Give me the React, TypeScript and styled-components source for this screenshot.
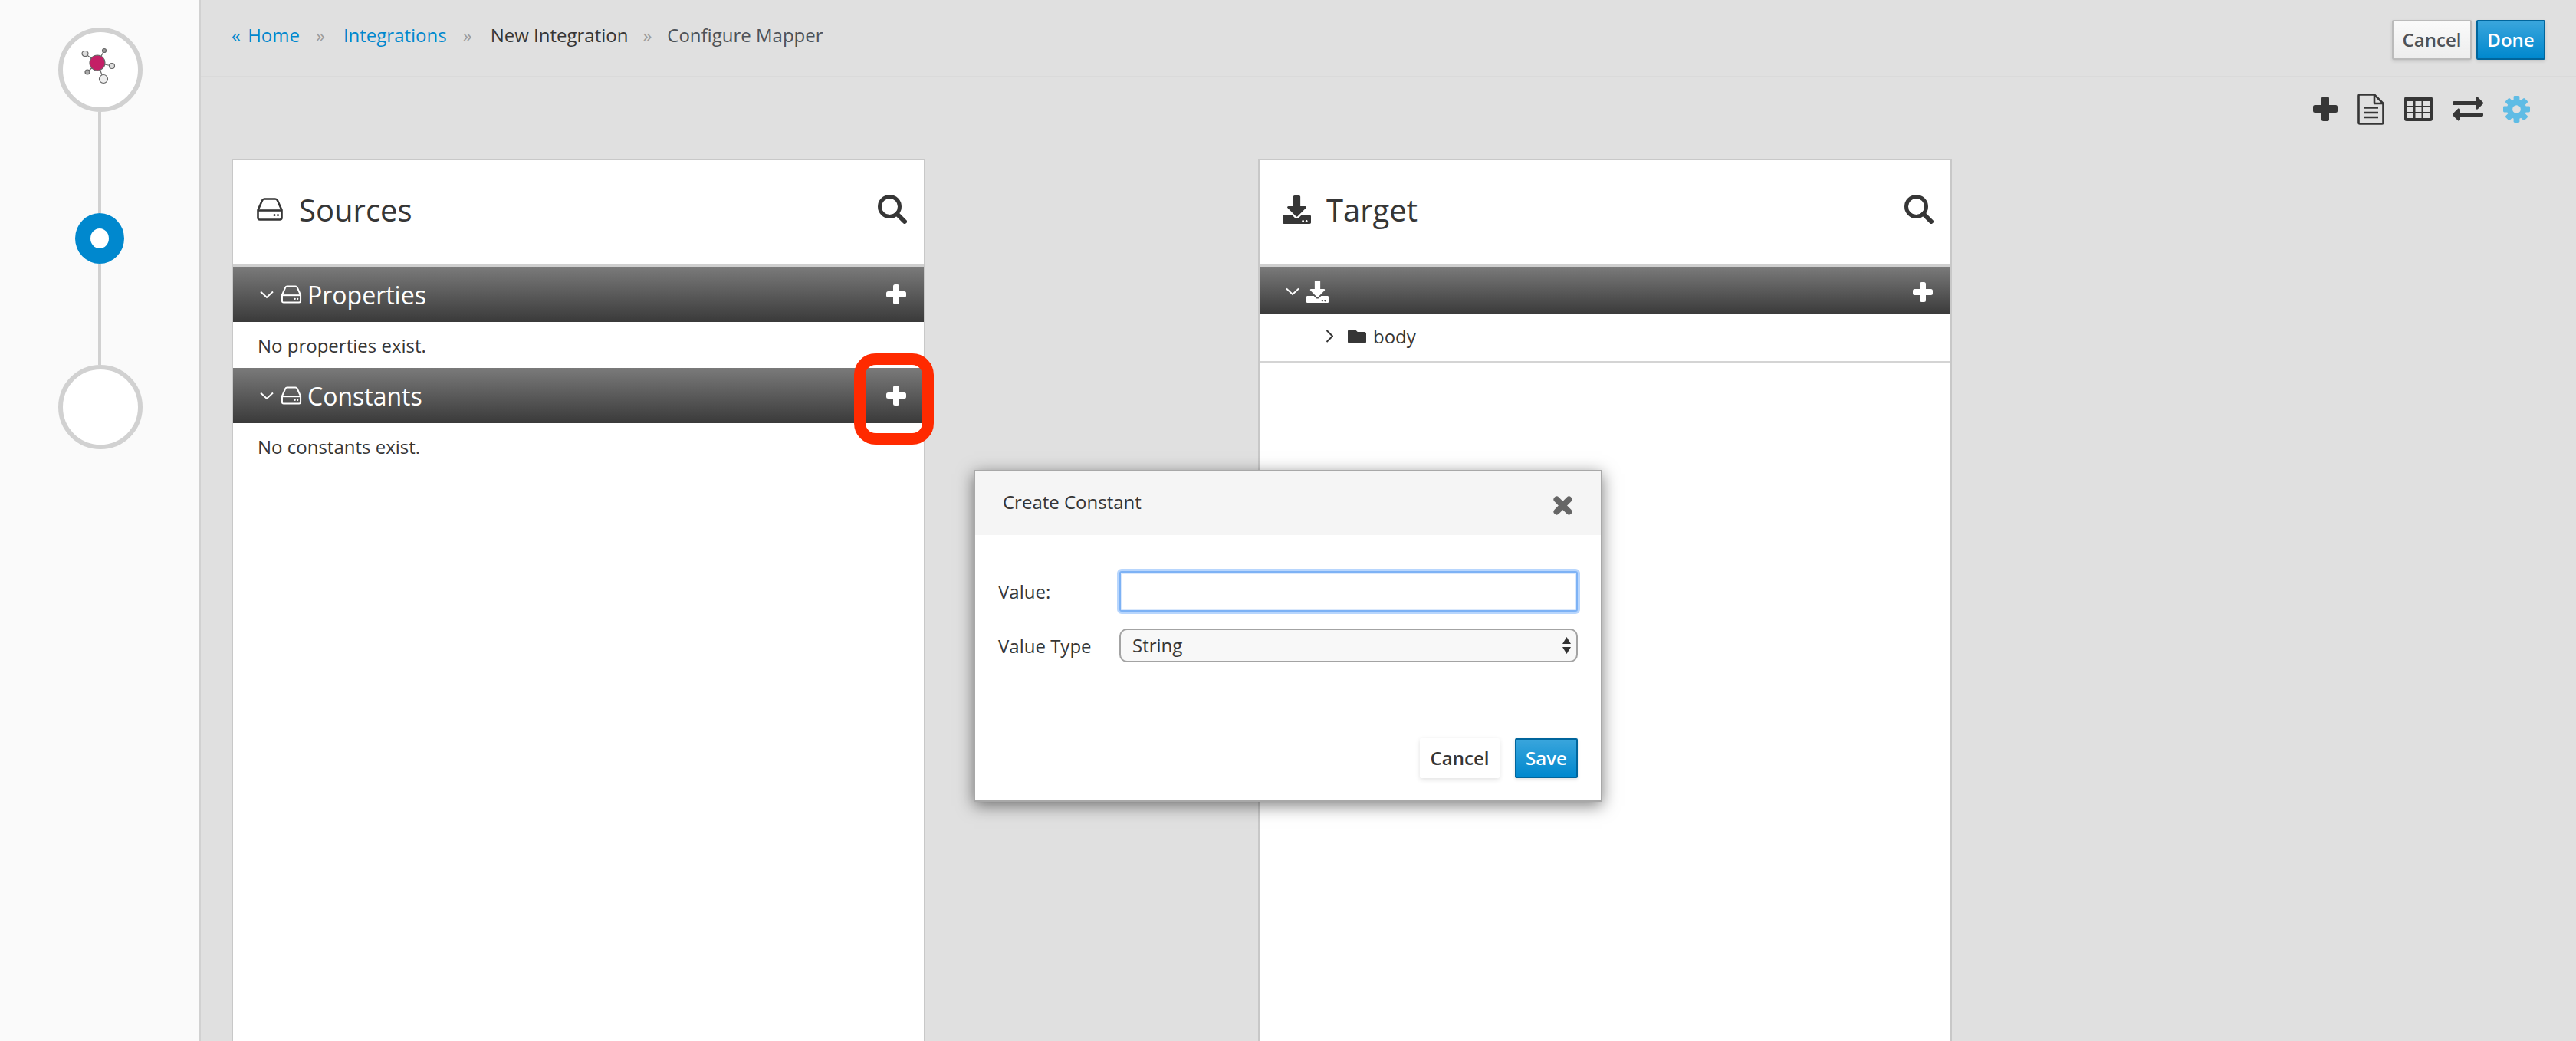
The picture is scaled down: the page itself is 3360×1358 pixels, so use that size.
import React from "react";
import styled, { createGlobalStyle } from "styled-components";
import { FaExchangeAlt, FaDownload, FaFolder } from "react-icons/fa";

const Global = createGlobalStyle`
  html, body { margin: 0; padding: 0; background: #e0e0e0; }
  * { box-sizing: border-box; }
`;

const Page = styled.div`
  position: relative;
  display: flex;
  width: 3360px;
  height: 1358px;
  overflow: hidden;
  background: #e0e0e0;
  font-family: "Open Sans", "Noto Sans", sans-serif;
  font-size: 24px;
  color: #363636;
`;

const Sidebar = styled.aside`
  flex: 0 0 262px;
  display: flex;
  flex-direction: column;
  align-items: center;
  padding-top: 36px;
  background: #fafafa;
  border-right: 2px solid #d1d1d1;
`;

const StepCircle = styled.div`
  width: 110px;
  height: 110px;
  margin-left: 2px;
  border-radius: 50%;
  border: 6px solid #d1d1d1;
  background: #fff;
  display: flex;
  align-items: center;
  justify-content: center;
  flex: none;
`;

const Connector = styled.div`
  width: 4px;
  height: 132px;
  background: #d1d1d1;
  flex: none;
`;

const ActiveStep = styled.div`
  width: 64px;
  height: 66px;
  border-radius: 50%;
  border: 20px solid #0088ce;
  background: #fff;
  flex: none;
`;

const Main = styled.main`
  flex: 1;
  min-width: 0;
  display: flex;
  flex-direction: column;
`;

const TopBar = styled.header`
  flex: 0 0 101px;
  display: flex;
  justify-content: space-between;
  align-items: flex-start;
  padding: 19px 40px 0 40px;
  border-bottom: 2px solid #dadada;
`;

const Crumbs = styled.nav`
  display: flex;
  align-items: center;
  height: 52px;
  font-size: 24px;
`;

const CrumbLink = styled.span`
  color: #0088ce;
`;

const BackMark = styled.span`
  margin-right: 3px;
`;

const CrumbText = styled.span<{ $muted?: boolean }>`
  color: ${(p) => (p.$muted ? "#4d5258" : "#363636")};
`;

const CrumbSep = styled.span<{ $tight?: boolean }>`
  color: #9c9c9c;
  margin: 0 ${(p) => (p.$tight ? 20 : 24)}px 0 ${(p) => (p.$tight ? 19 : 21)}px;
`;

const Actions = styled.div`
  display: flex;
  gap: 6px;
  margin-top: 7px;
`;

const PlainButton = styled.button<{ $w: number }>`
  width: ${(p) => p.$w}px;
  height: 52px;
  padding: 0 0 2px;
  font: 600 24px "Open Sans", sans-serif;
  color: #4d5258;
  border: 2px solid #bbb;
  border-radius: 2px;
  background: linear-gradient(#fafafa, #ededed);
  box-shadow: 0 2px 4px rgba(0, 0, 0, 0.12);
`;

const PrimaryButton = styled(PlainButton)`
  color: #fff;
  border-color: #00659c;
  background: linear-gradient(#39a5dc, #0088ce);
`;

const Toolbar = styled.div`
  flex: 0 0 106px;
  display: flex;
  align-items: center;
  justify-content: flex-end;
  gap: 26px;
  padding: 0 60px 24px 0;
  color: #363636;
`;

const Panels = styled.div`
  flex: 1;
  display: flex;
  gap: 434px;
  padding-left: 40px;
  min-height: 0;
`;

const Panel = styled.section`
  flex: 0 0 905px;
  background: #fff;
  border: 2px solid #c8c8c8;
  border-bottom: none;
`;

const PanelHead = styled.div`
  height: 139px;
  display: flex;
  align-items: center;
  gap: 20px;
  padding: 0 22px 8px 30px;
  border-bottom: 3px solid #cfcfcf;
  color: #363636;
`;

const PanelTitle = styled.h2`
  margin: 0;
  flex: 1;
  font: 400 40px "Open Sans", sans-serif;
  color: #363636;
`;

const Bar = styled.div<{ $short?: boolean }>`
  height: ${(p) => (p.$short ? 62 : 72)}px;
  display: flex;
  align-items: center;
  gap: 9px;
  padding: ${(p) => (p.$short ? "3px 23px 0 34px" : "0 23px 0 35px")};
  color: #fff;
  background: linear-gradient(#7a7a7a, #3a3a3a);
`;

const BarLabel = styled.span`
  flex: 1;
  font: 400 32px "Open Sans", sans-serif;
  color: #fff;
  margin-left: -2px;
`;

const BarSpacer = styled.span`
  flex: 1;
`;

const EmptyNote = styled.div`
  height: 60px;
  display: flex;
  align-items: center;
  padding-left: 32px;
  font-size: 24px;
  color: #363636;
`;

const TreeRow = styled.div`
  height: 63px;
  display: flex;
  align-items: center;
  gap: 9px;
  padding: 0 0 4px 86px;
  border-bottom: 2px solid #d4d4d4;
  font-size: 24px;
  color: #363636;
`;

const TreeFolder = styled(FaFolder)`
  margin-left: 10px;
`;

const Highlight = styled.div`
  position: absolute;
  left: 1114px;
  top: 461px;
  width: 104px;
  height: 119px;
  border: 15px solid #ff2a00;
  border-radius: 28px;
`;

const Modal = styled.div`
  position: absolute;
  left: 1270px;
  top: 613px;
  width: 820px;
  height: 433px;
  display: flex;
  flex-direction: column;
  background: #fff;
  border: 2px solid #a8a8a8;
  box-shadow: 0 5px 20px rgba(0, 0, 0, 0.5);
`;

const ModalHead = styled.div`
  flex: 0 0 83px;
  display: flex;
  align-items: center;
  justify-content: space-between;
  padding: 0 37px 0 36px;
  background: #f5f5f5;
`;

const ModalTitle = styled.span`
  font-size: 24px;
  color: #363636;
  padding-bottom: 4px;
`;

const CloseIcon = styled.svg`
  margin-top: 6px;
`;

const ModalBody = styled.div`
  flex: 1;
  display: grid;
  grid-template-columns: 158px 1fr;
  grid-auto-rows: min-content;
  align-items: center;
  row-gap: 22px;
  padding: 47px 30px 0 30px;
`;

const FieldLabel = styled.label`
  font-size: 24px;
  color: #363636;
`;

const TextInput = styled.input`
  width: 100%;
  height: 53px;
  background: #fff;
  border: 2px solid #7db2f5;
  border-radius: 3px;
  outline: none;
  box-shadow: 0 0 0 3px #b8d6fd, inset 0 0 0 2px #dbe9fc;
`;

const SelectWrap = styled.div`
  position: relative;
  height: 44px;
`;

const Select = styled.select`
  appearance: none;
  width: 100%;
  height: 100%;
  padding: 0 0 2px 15px;
  font: 400 24px "Open Sans", sans-serif;
  color: #363636;
  background: #f8f8f8;
  border: 2px solid #a3a3a3;
  border-radius: 10px;
`;

const SelectArrows = styled.svg`
  position: absolute;
  right: 9px;
  top: 11px;
  pointer-events: none;
`;

const ModalFoot = styled.div`
  display: flex;
  justify-content: flex-end;
  gap: 20px;
  padding: 0 30px 29px 0;
`;

const GhostButton = styled.button`
  width: 104px;
  height: 52px;
  padding: 0 0 2px;
  font: 600 24px "Open Sans", sans-serif;
  color: #363636;
  background: #fff;
  border: none;
  border-radius: 2px;
  box-shadow: 0 2px 6px rgba(0, 0, 0, 0.12);
`;

const LogoSvg = styled.svg`
  margin-top: -10px;
`;

const Plus = ({ size, bar }: { size: number; bar: number }) => {
  const o = (size - bar) / 2;
  return (
    <svg width={size} height={size} viewBox={`0 0 ${size} ${size}`} fill="currentColor">
      <rect x={o} y="0" width={bar} height={size} rx="2.5" />
      <rect x="0" y={o} width={size} height={bar} rx="2.5" />
    </svg>
  );
};

const Hdd = ({ w, h }: { w: number; h: number }) => (
  <svg width={w} height={h} viewBox="0 0 36 30" fill="none" stroke="currentColor" strokeWidth="2.6">
    <path d="M2.5 16L8 3.5Q9 1.5 11 1.5H25Q27 1.5 28 3.5L33.500 16V26Q33.500 28.500 31 28.500H5Q2.500 28.500 2.500 26Z" strokeLinejoin="round" />
    <path d="M2.500 16.500H33.500" />
    <circle cx="24" cy="22.500" r="1.500" fill="currentColor" stroke="none" />
    <circle cx="28.500" cy="22.500" r="1.500" fill="currentColor" stroke="none" />
  </svg>
);

const ChevronDown = () => (
  <svg width="18" height="11" viewBox="0 0 18 11" fill="none" stroke="currentColor" strokeWidth="2">
    <path d="M1 1.500L9 9L17 1.500" />
  </svg>
);

const ChevronRight = () => (
  <svg width="10" height="17" viewBox="0 0 10 17" fill="none" stroke="currentColor" strokeWidth="2">
    <path d="M1.500 1L9 8.500L1.500 16" />
  </svg>
);

const Search = () => (
  <svg width="38" height="38" viewBox="0 0 38 38" fill="none" stroke="currentColor">
    <circle cx="15.500" cy="15.500" r="13" strokeWidth="5" />
    <path d="M25 25L35 35" strokeWidth="6" strokeLinecap="round" />
  </svg>
);

const DocIcon = () => (
  <svg width="35" height="41" viewBox="0 0 35 41" fill="none" stroke="currentColor" strokeWidth="2.600">
    <path d="M1.500 3Q1.500 1.500 3 1.500H22L33.500 13V38Q33.500 39.500 32 39.500H3Q1.500 39.500 1.500 38Z" strokeLinejoin="round" />
    <path d="M22 1.500V13H33.500" strokeLinejoin="round" />
    <path d="M9 18.500H27M9 25H27M9 31H27" />
  </svg>
);

const TableIcon = () => (
  <svg width="37" height="32" viewBox="0 0 37 32">
    <rect width="37" height="32" rx="3" fill="currentColor" />
    {[4, 14.500, 25].map((x) =>
      [6, 14, 22].map((y) => <rect key={`${x}-${y}`} x={x} y={y} width="8" height="6" fill="#e0e0e0" />)
    )}
  </svg>
);

const Gear = () => {
  const teeth = [0, 45, 90, 135, 180, 225, 270, 315];
  return (
    <svg width="35" height="35" viewBox="0 0 36 36" fill="#5fbce5" fillRule="evenodd">
      {teeth.map((a) => (
        <rect key={a} x="14" y="0" width="8" height="9" rx="1.500" transform={`rotate(${a} 18 18)`} />
      ))}
      <path d="M18 5a13 13 0 1 0 0 26a13 13 0 1 0 0-26zM18 12.500a5.500 5.500 0 1 1 0 11a5.500 5.500 0 1 1 0-11z" />
    </svg>
  );
};

const Logo = () => (
  <LogoSvg width="60" height="60" viewBox="0 0 60 60">
    <g stroke="#666" strokeWidth="1.200">
      <line x1="26" y1="26" x2="10" y2="14" />
      <line x1="26" y1="26" x2="35" y2="10" />
      <line x1="26" y1="26" x2="45" y2="30" />
      <line x1="26" y1="26" x2="13" y2="38" />
      <line x1="26" y1="26" x2="34" y2="47" />
      <ellipse cx="10" cy="14" rx="4" ry="3.500" fill="#ddd" />
      <ellipse cx="35" cy="10" rx="2.500" ry="2.500" fill="#999" />
      <ellipse cx="45" cy="30" rx="3.500" ry="3.500" fill="#ddd" />
      <ellipse cx="13" cy="38" rx="3" ry="3" fill="#aaa" />
      <ellipse cx="34" cy="47" rx="5.500" ry="5.500" fill="#eee" />
      <circle cx="26" cy="26" r="10" fill="#c41f66" />
    </g>
  </LogoSvg>
);

export default function App() {
  return (
    <Page>
      <Global />
      <Sidebar>
        <StepCircle><Logo /></StepCircle>
        <Connector />
        <ActiveStep />
        <Connector />
        <StepCircle />
      </Sidebar>
      <Main>
        <TopBar>
          <Crumbs>
            <CrumbLink><BackMark>«</BackMark> Home</CrumbLink>
            <CrumbSep>»</CrumbSep>
            <CrumbLink>Integrations</CrumbLink>
            <CrumbSep>»</CrumbSep>
            <CrumbText>New Integration</CrumbText>
            <CrumbSep $tight>»</CrumbSep>
            <CrumbText $muted>Configure Mapper</CrumbText>
          </Crumbs>
          <Actions>
            <PlainButton $w={104}>Cancel</PlainButton>
            <PrimaryButton $w={90}>Done</PrimaryButton>
          </Actions>
        </TopBar>
        <Toolbar>
          <Plus size={32} bar={10} />
          <DocIcon />
          <TableIcon />
          <FaExchangeAlt size={40} />
          <Gear />
        </Toolbar>
        <Panels>
          <Panel>
            <PanelHead>
              <Hdd w={36} h={30} />
              <PanelTitle>Sources</PanelTitle>
              <Search />
            </PanelHead>
            <Bar>
              <ChevronDown />
              <Hdd w={28} h={24} />
              <BarLabel>Properties</BarLabel>
              <Plus size={26} bar={8} />
            </Bar>
            <EmptyNote>No properties exist.</EmptyNote>
            <Bar>
              <ChevronDown />
              <Hdd w={28} h={24} />
              <BarLabel>Constants</BarLabel>
              <Plus size={26} bar={8} />
            </Bar>
            <EmptyNote>No constants exist.</EmptyNote>
          </Panel>
          <Panel>
            <PanelHead>
              <FaDownload size={37} />
              <PanelTitle>Target</PanelTitle>
              <Search />
            </PanelHead>
            <Bar $short>
              <ChevronDown />
              <FaDownload size={29} />
              <BarSpacer />
              <Plus size={26} bar={8} />
            </Bar>
            <TreeRow>
              <ChevronRight />
              <TreeFolder size={24} />
              <span>body</span>
            </TreeRow>
          </Panel>
        </Panels>
      </Main>
      <Highlight />
      <Modal>
        <ModalHead>
          <ModalTitle>Create Constant</ModalTitle>
          <CloseIcon width="25" height="25" viewBox="0 0 25 25" fill="none" stroke="#666" strokeWidth="8" strokeLinecap="round">
            <path d="M4.500 4.500L20.500 20.500M20.500 4.500L4.500 20.500" />
          </CloseIcon>
        </ModalHead>
        <ModalBody>
          <FieldLabel>Value:</FieldLabel>
          <TextInput />
          <FieldLabel>Value Type</FieldLabel>
          <SelectWrap>
            <Select defaultValue="String">
              <option>String</option>
            </Select>
            <SelectArrows width="11" height="22" viewBox="0 0 11 22" fill="#333">
              <path d="M5.500 0L11 9H0z" />
              <path d="M0 13h11L5.500 22z" />
            </SelectArrows>
          </SelectWrap>
        </ModalBody>
        <ModalFoot>
          <GhostButton>Cancel</GhostButton>
          <PrimaryButton $w={82}>Save</PrimaryButton>
        </ModalFoot>
      </Modal>
    </Page>
  );
}
